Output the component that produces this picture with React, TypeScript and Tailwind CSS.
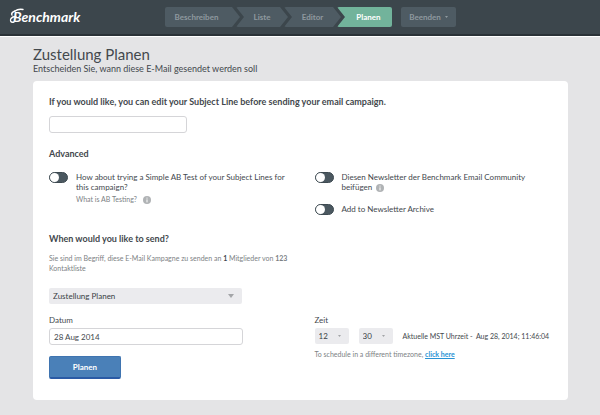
import type { ReactNode } from 'react';
import clsx from 'clsx';

const steps = [
  {
    label: 'Beschreiben',
    shape: 'w-[75px] pr-3 [clip-path:polygon(0_0,calc(100%-8px)_0,100%_50%,calc(100%-8px)_100%,0_100%)]',
  },
  {
    label: 'Liste',
    shape: 'w-[52px] -ml-1 [clip-path:polygon(0_0,calc(100%-8px)_0,100%_50%,calc(100%-8px)_100%,0_100%,8px_50%)]',
  },
  {
    label: 'Editor',
    shape: 'w-[57px] -ml-1 [clip-path:polygon(0_0,calc(100%-8px)_0,100%_50%,calc(100%-8px)_100%,0_100%,8px_50%)]',
  },
  {
    label: 'Planen',
    active: true,
    shape: 'w-[55px] -ml-1 pl-2 [clip-path:polygon(0_0,100%_0,100%_100%,0_100%,8px_50%)]',
  },
];

function Logo() {
  return (
    <a href="#" aria-label="Benchmark" className="absolute left-2 top-1">
      <svg width="84" height="26" viewBox="0 0 84 26" fill="none">
        <text x="5" y="18" fill="#fff" fontFamily="Lato, sans-serif" fontStyle="italic" fontWeight="700" fontSize="14">
          Benchmark
        </text>
        <path d="M7 7C4 8 3 10 4 11M6 18C3 19 1.500 17 3 14.500c1-1.500 3-2 5-2" stroke="#fff" strokeWidth="1.400" strokeLinecap="round" />
        <path d="M7 7c2-1.500 5-2 8-1.500" stroke="#fff" strokeWidth="1.400" strokeLinecap="round" />
      </svg>
    </a>
  );
}

function Header() {
  return (
    <header className="relative h-9 bg-[#3c464c] border-b-2 border-[#2a3237] shadow-[0_1px_0_#fff] pl-[165px] flex items-center gap-[9px]">
      <Logo />
      <nav className="flex">
        {steps.map((step) => (
          <button
            key={step.label}
            className={clsx(
              'h-5 rounded-xs text-[8px] font-bold',
              step.shape,
              step.active ? 'bg-[#72b39b] text-white' : 'bg-[#4e5b63] text-[#8f999f]',
            )}
          >
            {step.label}
          </button>
        ))}
      </nav>
      <button className="h-5 w-[55px] rounded-xs bg-[#4e5b63] text-[#8f999f] text-[8px] font-bold flex items-center justify-center gap-1">
        Beenden
        <Caret className="w-[3px] h-[2px]" />
      </button>
    </header>
  );
}

function Caret({ className }: { className: string }) {
  return (
    <svg viewBox="0 0 8 6" preserveAspectRatio="none" fill="currentColor" className={className}>
      <path d="M0 0h8L4 6z" />
    </svg>
  );
}

function InfoIcon() {
  return (
    <svg viewBox="0 0 8 8" className="inline-block size-2 ml-1">
      <circle cx="4" cy="4" r="4" fill="#b0b3b5" />
      <path d="M4 1.6v1M4 3.4v3" stroke="#fff" strokeWidth="1" />
    </svg>
  );
}

function Toggle({ id, label, children }: { id: string; label: string; children?: ReactNode }) {
  return (
    <div className="flex items-start gap-2">
      <input
        id={id}
        type="checkbox"
        className="shrink-0 appearance-none w-[19px] h-[11px] rounded-full bg-[#4b5860] border border-[#3e4a51] before:block before:size-[9px] before:rounded-full before:bg-white checked:before:translate-x-2"
      />
      <div className="leading-[10px]">
        <label htmlFor={id}>{label}</label>
        {children}
      </div>
    </div>
  );
}

function Select({ label, options, className, caret }: { label: string; options: string[]; className: string; caret: string }) {
  return (
    <div className={clsx('relative', className)}>
      <select aria-label={label} className="block appearance-none w-full h-4 rounded-xs bg-[#ebebee] pl-1 text-[8px] text-[#3a3f44]">
        {options.map((option) => (
          <option key={option}>{option}</option>
        ))}
      </select>
      <Caret className={clsx('absolute top-1/2 -translate-y-1/2 text-[#a3a5a8] pointer-events-none', caret)} />
    </div>
  );
}

export default function App() {
  return (
    <div className="min-h-screen bg-[#e4e4e6] text-[8px] text-[#43484d] font-['Lato',sans-serif]">
      <Header />
      <main className="pl-[33px] pr-8 pt-2 pb-[14px]">
        <h1 className="text-[15px] leading-5">Zustellung Planen</h1>
        <p className="text-[9px] leading-[10px]">Entscheiden Sie, wann diese E-Mail gesendet werden soll</p>

        <form className="mt-[7px] rounded bg-white px-4 pt-[15px] pb-[21px]" onSubmit={(e) => e.preventDefault()}>
          <label htmlFor="subject" className="block text-[9px] leading-3 font-bold">
            If you would like, you can edit your Subject Line before sending your email campaign.
          </label>
          <input id="subject" className="block mt-2 w-[138px] h-[17px] rounded-[3px] border border-[#d5d5d8] px-1" />

          <h2 className="mt-[15px] text-[9px] leading-3 font-bold">Advanced</h2>
          <div className="mt-3 grid grid-cols-2 gap-7">
            <Toggle id="ab-test" label="How about trying a Simple AB Test of your Subject Lines for this campaign?">
              <p className="mt-[2px] text-[7px] text-[#7c8184]">
                What is AB Testing? <InfoIcon />
              </p>
            </Toggle>
            <div className="flex flex-col gap-3">
              <Toggle id="community" label="Diesen Newsletter der Benchmark Email Community beifügen">
                <InfoIcon />
              </Toggle>
              <Toggle id="archive" label="Add to Newsletter Archive" />
            </div>
          </div>

          <h2 className="mt-[18px] text-[9px] leading-3 font-bold">When would you like to send?</h2>
          <p className="mt-2 w-[244px] text-[7px] leading-[10px] text-[#7c8184]">
            Sie sind im Begriff, diese E-Mail Kampagne zu senden an <b className="text-[#43484d]">1</b> Mitglieder von{' '}
            <b>123</b> Kontaktliste
          </p>

          <Select label="Versandart" options={['Zustellung Planen']} className="mt-[15px] w-[193px]" caret="right-2 w-[6px] h-1" />

          <div className="mt-2 grid grid-cols-2 gap-7">
            <div>
              <label htmlFor="date" className="block leading-4">Datum</label>
              <input
                id="date"
                defaultValue="28 Aug 2014"
                className="block w-[194px] h-[17px] rounded-[3px] border border-[#d5d5d8] px-1"
              />
              <button className="mt-[11px] w-[72px] h-[23px] rounded-xs bg-[#4a80b8] border border-[#3f74b0] border-b-2 border-b-[#2a5aa5] text-white font-bold">
                Planen
              </button>
            </div>
            <div>
              <p className="leading-4">Zeit</p>
              <div className="flex items-center gap-[10px]">
                <Select label="Stunde" options={['12']} className="w-[34px]" caret="right-2 w-[3px] h-[2px]" />
                <Select label="Minute" options={['30']} className="w-[34px]" caret="right-2 w-[3px] h-[2px]" />
                <p className="text-[7px] whitespace-nowrap">Aktuelle MST Uhrzeit -&nbsp; Aug 28, 2014; 11:46:04</p>
              </div>
              <p className="mt-1 text-[7px] leading-3 text-[#7c8184]">
                To schedule in a different timezone,{' '}
                <a href="#" className="font-bold underline text-[#2a93d5]">click here</a>
              </p>
            </div>
          </div>
        </form>
      </main>
    </div>
  );
}
